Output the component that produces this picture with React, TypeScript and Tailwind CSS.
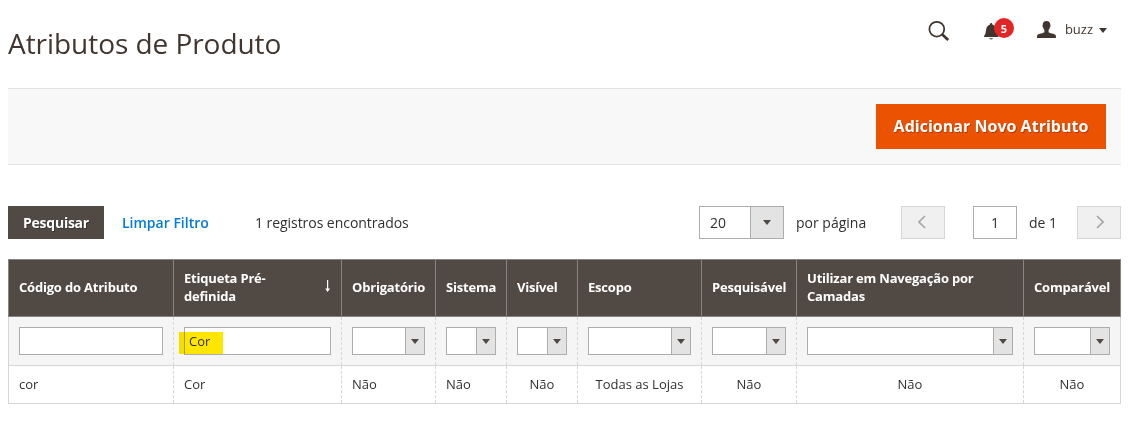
import React from "react";

type Column = {
  label: string;
  value: string;
  filter: "text" | "select";
  filterValue?: string;
  sorted?: boolean;
  centered?: boolean;
};

const columns: Column[] = [
  { label: "Código do Atributo", value: "cor", filter: "text" },
  { label: "Etiqueta Pré-definida", value: "Cor", filter: "text", filterValue: "Cor", sorted: true },
  { label: "Obrigatório", value: "Não", filter: "select" },
  { label: "Sistema", value: "Não", filter: "select" },
  { label: "Visível", value: "Não", filter: "select", centered: true },
  { label: "Escopo", value: "Todas as Lojas", filter: "select", centered: true },
  { label: "Pesquisável", value: "Não", filter: "select", centered: true },
  { label: "Utilizar em Navegação por Camadas", value: "Não", filter: "select", centered: true },
  { label: "Comparável", value: "Não", filter: "select", centered: true },
];

const gridColumns = "grid grid-cols-[165px_168px_94px_71px_71px_124px_95px_227px_97px]";

function Caret({ className = "" }: { className?: string }) {
  return (
    <svg width="8" height="5" viewBox="0 0 8 5" className={className}>
      <path d="M0 0h8L4 5z" fill="currentColor" />
    </svg>
  );
}

function Header() {
  return (
    <header className="flex h-[88px] items-start justify-between">
      <h1 className="pt-6 text-[28px] leading-[38px] tracking-[-0.05px] text-[#41362f]">Atributos de Produto</h1>
      <div className="flex items-start pr-[14px] text-[#41362f]">
        <svg width="22" height="21" viewBox="0 0 22 21" className="mt-5 mr-[33px]" fill="none" stroke="currentColor">
          <circle cx="8.8" cy="9.2" r="7.4" strokeWidth="1.8" />
          <path d="M14 14.3l6.2 5.7" strokeWidth="2.7" />
        </svg>
        <div className="relative mt-[18px] h-[22px] w-8">
          <svg width="15" height="17" viewBox="0 0 15 17" className="mt-[5px] ml-px" fill="currentColor">
            <path d="M0 14c0-2 1.600-2.400 1.800-5C2 4.800 3.200 2.200 6 1.500 6 .7 6.500 0 7.200 0s1.200.7 1.200 1.500C11.200 2.200 12.500 4.800 12.700 9c.2 2.600 1.800 3 1.800 5zM5.200 15.200h3.800c-.5 1.600-3.300 1.600-3.800 0z" />
          </svg>
          <span className="absolute top-0 left-[11px] flex size-5 items-center justify-center rounded-full bg-[#e22626] text-[11px] leading-none font-bold text-white">
            5
          </span>
        </div>
        <svg width="19" height="17" viewBox="0 0 19 17" className="mt-[21px] ml-[22px]" fill="currentColor">
          <path d="M9.500 0C12.300 0 13.400 1.700 13.300 4c.5.700.2 1.900-.4 2.300-.3 1.400-.8 2.200-1.300 2.700v2.200c1.200 1 5.600 1.400 6.800 2.600.5.600.6 1.900.6 3.200H0c0-1.300.1-2.600.6-3.200 1.200-1.200 5.600-1.600 6.800-2.600V9C6.900 8.500 6.400 7.700 6.100 6.300c-.6-.4-.9-1.600-.4-2.300C5.600 1.700 6.700 0 9.500 0z" />
        </svg>
        <span className="mt-5 ml-[9px] text-[13px] leading-[18px]">buzz</span>
        <Caret className="mt-[28px] ml-[6px]" />
      </div>
    </header>
  );
}

function SelectBox({ className, value = "" }: { className: string; value?: string }) {
  return (
    <div className={`flex border border-[#adadad] bg-white ${className}`}>
      <span className="flex min-w-0 flex-1 items-center pl-[10px] text-sm">{value}</span>
      <span
        className={`flex items-center justify-center border-l border-[#adadad] bg-[#e3e3e3] text-[#514943] ${
          value ? "w-[33px]" : "w-[19px]"
        }`}
      >
        <Caret />
      </span>
    </div>
  );
}

function PageArrow({ next = false }: { next?: boolean }) {
  return (
    <button
      className={`flex h-[33px] w-11 items-center justify-center border border-[#d6d6d6] bg-[#f0f0f0] text-[#a8a5a3] ${
        next ? "pl-px" : "pr-[3px]"
      }`}
    >
      <svg width="8" height="14" viewBox="0 0 8 14" className="mb-[2px]" fill="none" stroke="currentColor" strokeWidth="1.600">
        <path d={next ? "M1 1l6 6-6 6" : "M7 1L1 7l6 6"} />
      </svg>
    </button>
  );
}

function Toolbar() {
  return (
    <div className="mt-[41px] flex h-[33px] items-center text-sm">
      <button className="h-[33px] w-24 bg-[#514943] font-bold tracking-[-0.25px] text-white [text-shadow:1px_1px_0_rgba(0,0,0,0.3)]">
        Pesquisar
      </button>
      <button className="ml-[18px] w-[88px] text-left font-semibold whitespace-nowrap text-[#007bdb]">Limpar Filtro</button>
      <span className="ml-[45px] tracking-[-0.05px]">1 registros encontrados</span>
      <SelectBox value="20" className="ml-auto h-[33px] w-[85px]" />
      <span className="ml-3 w-[105px]">por página</span>
      <PageArrow />
      <span className="ml-7 flex h-[33px] w-11 items-center justify-center border border-[#adadad]">1</span>
      <span className="ml-3 w-12">de 1</span>
      <PageArrow next />
    </div>
  );
}

function FilterField({ column }: { column: Column }) {
  if (column.filter === "select") return <SelectBox className="h-7 w-full" />;
  return (
    <div className="relative flex h-7 w-full items-center border border-[#adadad] bg-white pl-[4px]">
      {column.filterValue && (
        <span className="absolute top-[4px] -left-[6px] h-[22px] w-11 bg-[#ffe600] mix-blend-multiply" />
      )}
      <span className="relative">{column.filterValue}</span>
    </div>
  );
}

function AttributesGrid() {
  return (
    <div className="mt-5 text-[13px] leading-[18px]">
      <div className={`${gridColumns} h-[58px] border-y border-l border-[#8a837f] bg-[#514943] text-white`}>
        {columns.map((c) => (
          <div
            key={c.label}
            className="flex items-center justify-between border-r border-[#8a837f] px-[10px] pb-[2px] font-bold tracking-[-0.2px]"
          >
            <span className={c.sorted ? "w-[100px]" : "w-max"}>{c.label}</span>
            {c.sorted && (
              <svg width="7" height="12" viewBox="0 0 7 12" className="mb-[3px] shrink-0" fill="currentColor">
                <path d="M3 0h1.200v8.500H6L3.600 12 1.200 8.500H3z" />
              </svg>
            )}
          </div>
        ))}
      </div>
      <div className={`${gridColumns} h-[49px] border-b border-l border-[#d6d6d6] bg-[#f5f5f5]`}>
        {columns.map((c) => (
          <div
            key={c.label}
            className="border-r border-dashed border-[#d6d6d6] px-[10px] pt-[10px] last:border-solid"
          >
            <FilterField column={c} />
          </div>
        ))}
      </div>
      <div className={`${gridColumns} h-[38px] border-b border-l border-[#d6d6d6]`}>
        {columns.map((c) => (
          <div
            key={c.label}
            className={`flex items-center border-r border-dashed border-[#d6d6d6] px-[10px] pb-[2px] last:border-solid ${
              c.centered ? "justify-center" : ""
            }`}
          >
            {c.value}
          </div>
        ))}
      </div>
    </div>
  );
}

export default function App() {
  return (
    <main className="h-[442px] w-[1134px] overflow-hidden bg-white pr-[13px] pl-2 font-['Open_Sans',sans-serif] text-[#303030]">
      <Header />
      <section className="flex h-[77px] items-center justify-end border-y border-[#e3e3e3] bg-[#f8f8f8] pr-[15px]">
        <button className="h-[45px] w-[230px] bg-[#eb5202] pb-[2px] text-base font-bold tracking-[0.02px] text-white [text-shadow:1px_1px_0_rgba(0,0,0,0.25)]">
          Adicionar Novo Atributo
        </button>
      </section>
      <Toolbar />
      <AttributesGrid />
    </main>
  );
}
